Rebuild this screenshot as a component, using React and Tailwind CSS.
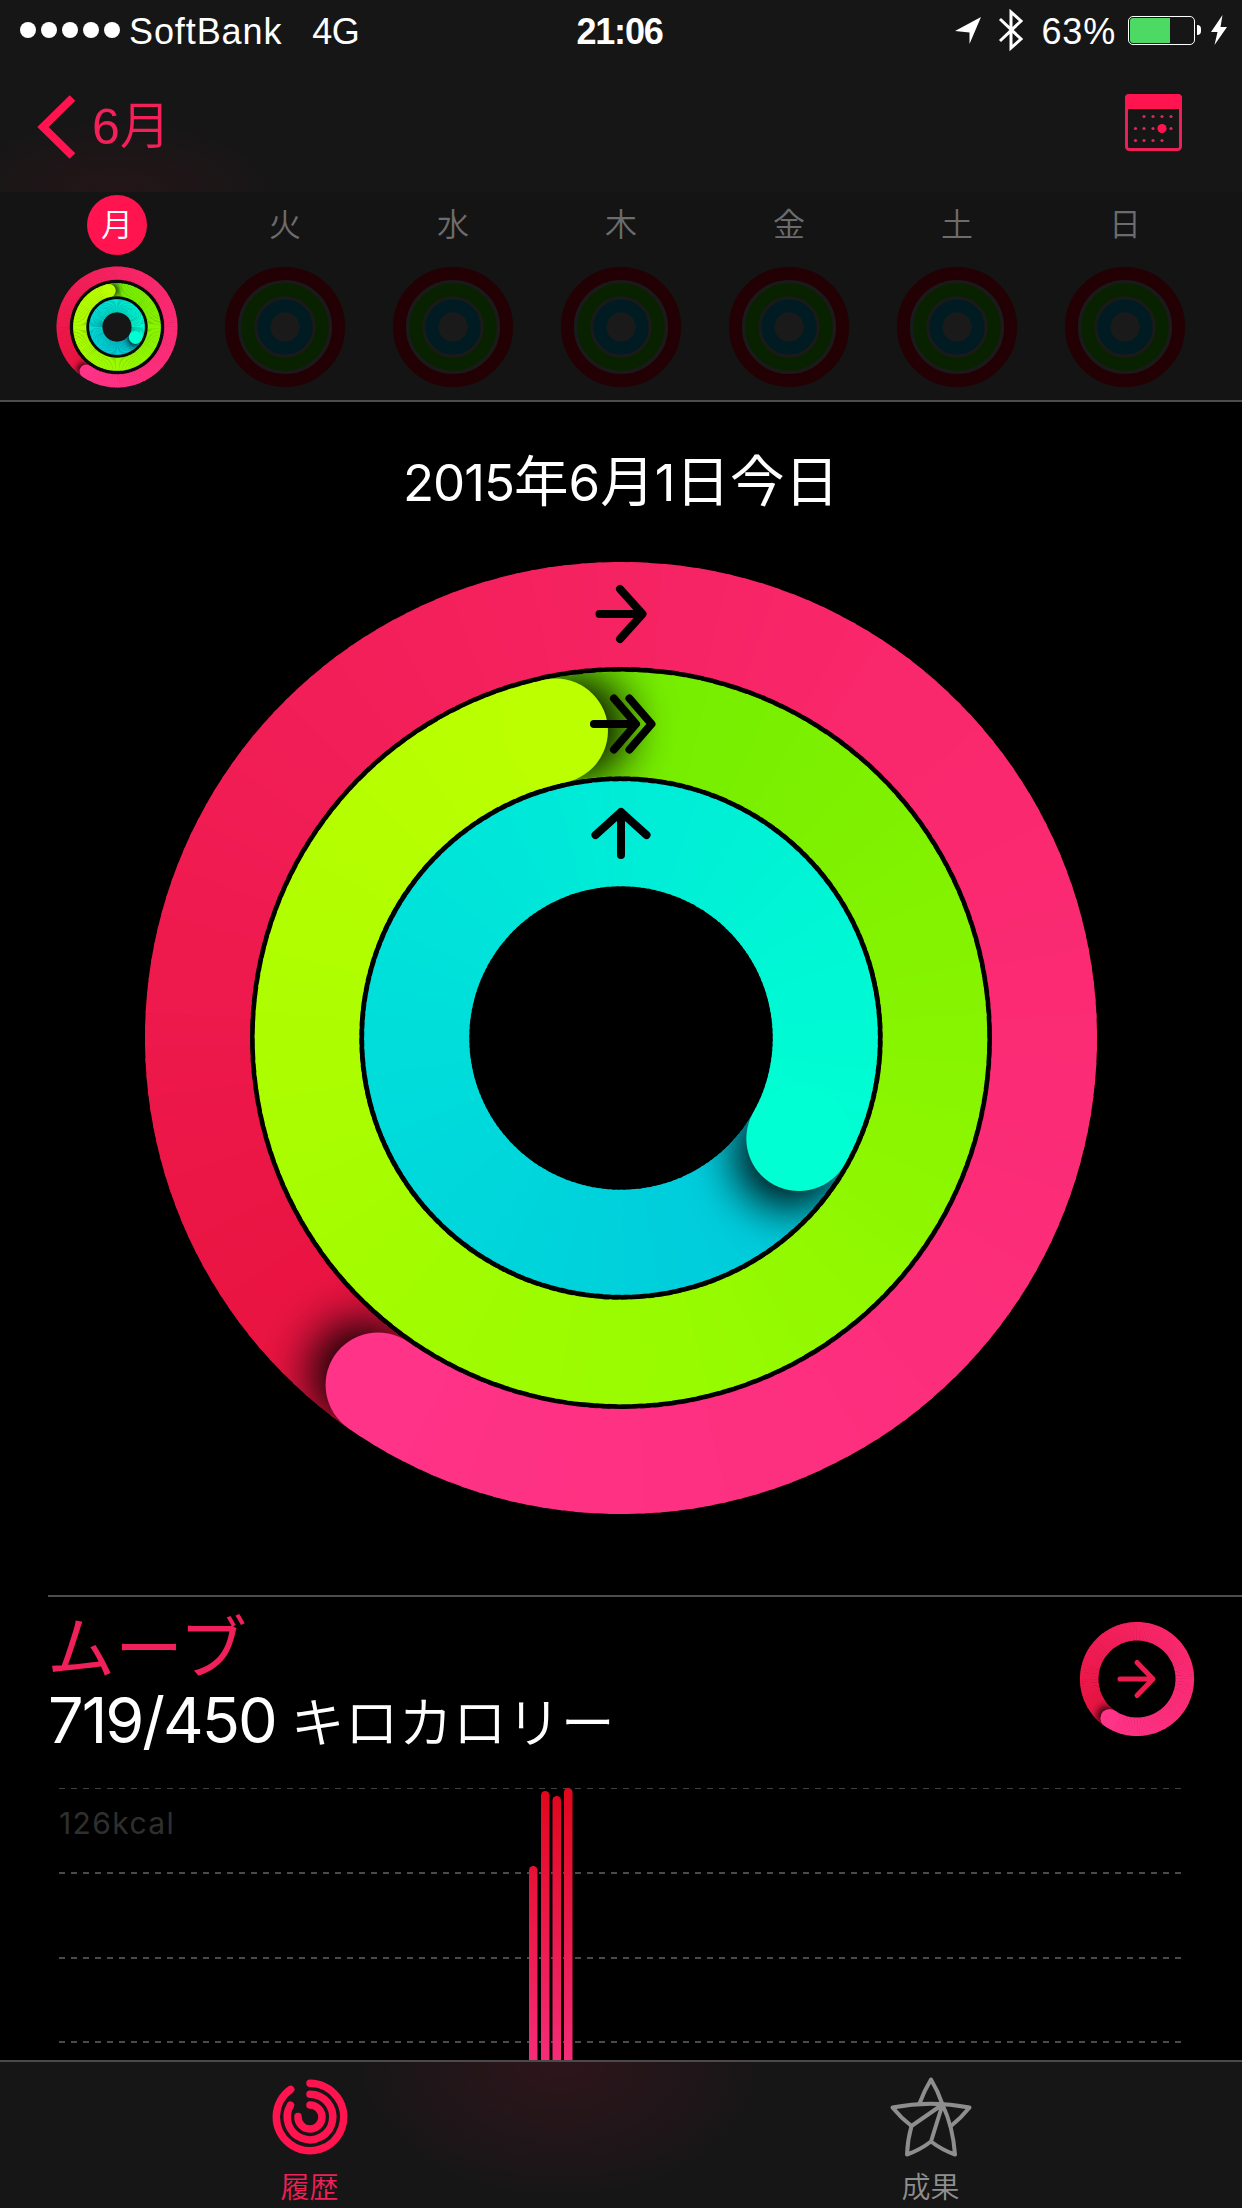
import React from "react";

const WEEK = ["月", "火", "水", "木", "金", "土", "日"];

const MOVE = { from: "#e8123d", mid: "#f9276b", to: "#ff3388", angle: 215 };
const EXERCISE = { from: "#72ec00", mid: "#98fb00", to: "#bcff00", angle: 348 };
const STAND = { from: "#00c8dc", mid: "#00e2da", to: "#00ffd2", angle: 119.5 };

const BARS = [
  { x: 470, top: 78 },
  { x: 482, top: 3 },
  { x: 493.5, top: 8 },
  { x: 505, top: 0 },
];

function point(r, deg) {
  const a = ((deg - 90) * Math.PI) / 180;
  return [r * Math.cos(a), r * Math.sin(a)];
}

function arc(r, start, end) {
  const [x1, y1] = point(r, start);
  const [x2, y2] = point(r, end);
  const large = end - start > 180 ? 1 : 0;
  return `M${x1} ${y1}A${r} ${r} 0 ${large} 1 ${x2} ${y2}`;
}

function mix(a, b, t) {
  const channel = (hex, i) => parseInt(hex.slice(1 + i * 2, 3 + i * 2), 16);
  const rgb = [0, 1, 2].map((i) =>
    Math.round(channel(a, i) + (channel(b, i) - channel(a, i)) * t)
  );
  return `rgb(${rgb.join(",")})`;
}

// One lap of an activity ring, the rounded head lies over its own tail
function Ring({ id, r, width, colors }) {
  const steps = 180;
  const size = 360 / steps;
  const segments = Array.from({ length: steps }, (_, i) => {
    const t = i / (steps - 1);
    const start = colors.angle + i * size;
    return (
      <path
        key={i}
        d={arc(r, start, start + size + (i < steps - 1 ? 0.6 : 0))}
        stroke={
          t < 0.5
            ? mix(colors.from, colors.mid, t * 2)
            : mix(colors.mid, colors.to, t * 2 - 1)
        }
        strokeWidth={width}
      />
    );
  });
  const [cx, cy] = point(r, colors.angle);
  const [sx, sy] = point(r, colors.angle + ((width * 0.18) / r) * 57.3);
  const outer = r + width / 2;
  const inner = r - width / 2;

  return (
    <g fill="none">
      <clipPath id={`${id}-clip`}>
        <path
          clipRule="evenodd"
          d={`M${-outer} 0a${outer} ${outer} 0 1 0 ${outer * 2} 0a${outer} ${outer} 0 1 0 ${-outer * 2} 0zM${-inner} 0a${inner} ${inner} 0 1 0 ${inner * 2} 0a${inner} ${inner} 0 1 0 ${-inner * 2} 0z`}
        />
      </clipPath>
      <filter id={`${id}-blur`} x="-100%" y="-100%" width="300%" height="300%">
        <feGaussianBlur stdDeviation={width * 0.23} />
      </filter>
      {segments.slice(0, 120)}
      <g clipPath={`url(#${id}-clip)`}>
        <circle
          cx={sx}
          cy={sy}
          r={width / 2}
          fill="#000"
          filter={`url(#${id}-blur)`}
        />
      </g>
      {segments.slice(120)}
      <circle cx={cx} cy={cy} r={width / 2} fill={colors.to} />
    </g>
  );
}

function StatusBar() {
  return (
    <div className="grid h-[60px] grid-cols-[1fr_auto_1fr] items-center pl-5 pr-[14px] font-['Liberation_Sans',sans-serif] text-[36px] leading-none text-white">
      <div className="flex items-center">
        <div className="flex gap-[5px]">
          {[0, 1, 2, 3, 4].map((i) => (
            <span key={i} className="h-4 w-4 rounded-full bg-white" />
          ))}
        </div>
        <span className="ml-[9px] mt-1 tracking-[0.9px]">SoftBank</span>
        <span className="ml-[30px] mt-1 tracking-[-0.5px]">4G</span>
      </div>
      <span className="mr-[9px] mt-1 font-bold tracking-[-1.2px]">21:06</span>
      <div className="flex items-center justify-end">
        <svg width="28" height="32" viewBox="0 0 28 32" className="fill-white">
          <path d="M27 3 15.500 30V18.500L1 17z" />
        </svg>
        <svg
          width="26"
          height="44"
          viewBox="0 0 26 44"
          className="ml-4 fill-none stroke-white stroke-[3]"
        >
          <path d="M2 11 23 31 13 40V4L23 13 2 33" />
        </svg>
        <span className="ml-[18px] mt-1 tracking-[0.8px]">63%</span>
        <div className="ml-3 flex h-[29px] w-[67px] rounded-[5px] border-[1.5px] border-white p-[1px]">
          <span className="w-10 rounded-l-[3px] bg-[#4cd964]" />
        </div>
        <span className="ml-[2px] h-[10px] w-1 rounded-r-full bg-white" />
        <svg
          width="18"
          height="30"
          viewBox="0 0 18 30"
          className="ml-[9px] fill-white"
        >
          <path d="M12.500 0 1 17h6.500L4.500 30 17 12h-6.500z" />
        </svg>
      </div>
    </div>
  );
}

function CalendarIcon() {
  const rows = [
    [18, 27, 36, 45],
    [9.5, 18, 27, 45],
    [9.5, 18, 27, 36],
  ];
  return (
    <svg width="57" height="57" viewBox="0 0 57 57">
      <rect
        x="1.500"
        y="1.500"
        width="54"
        height="54"
        rx="3"
        className="fill-none stroke-[#ee1f56] stroke-[3]"
      />
      <path d="M0 15V4a4 4 0 0 1 4-4h49a4 4 0 0 1 4 4v11z" fill="#ff1450" />
      {rows.map((row, y) =>
        row.map((x) => (
          <circle
            key={`${x}-${y}`}
            cx={x + 1}
            cy={22.5 + y * 12}
            r="1.600"
            fill="#d8295a"
          />
        ))
      )}
      <circle cx="37" cy="34.500" r="4.600" fill="#ff1450" />
    </svg>
  );
}

function NavBar() {
  return (
    <div className="flex h-[132px] items-start justify-between pl-[37px] pr-[60px]">
      <button className="flex items-start pt-[34px] text-[#f4205a]">
        <svg
          width="40"
          height="66"
          viewBox="0 0 40 66"
          className="fill-none stroke-[#ff1450] stroke-[8]"
        >
          <path d="M35.500 4 6 33l29.500 29" />
        </svg>
        <span className="ml-[15px] mt-[-5px] flex items-baseline text-[51px] leading-[66px]">
          <span className="font-['Liberation_Sans',sans-serif] text-[50px]">6</span>
          <span className="font-['Noto_Sans_CJK_JP',sans-serif] font-[350]">
            月
          </span>
        </span>
      </button>
      <button className="pt-[34px]">
        <CalendarIcon />
      </button>
    </div>
  );
}

function SmallRings({ active }) {
  return (
    <svg width="124" height="124" viewBox="-62.500 -62.500 125 125">
      {active ? (
        <>
          <circle r="55" fill="#07090a" />
          <circle r="15.500" fill="#161616" />
          <Ring id="day-move" r={54.3} width={13.3} colors={MOVE} />
          <Ring id="day-exercise" r={37.6} width={13.2} colors={EXERCISE} />
          <Ring id="day-stand" r={21.4} width={13.2} colors={STAND} />
        </>
      ) : (
        <g fill="none" strokeWidth="13">
          <circle r="48" fill="#1a1a1a" />
          <circle r="54" stroke="#230003" />
          <circle r="37.500" stroke="#082200" />
          <circle r="21.300" stroke="#001b22" />
        </g>
      )}
    </svg>
  );
}

function WeekStrip() {
  return (
    <div className="grid h-[210px] grid-cols-7 border-b-2 border-[#4d4d4d] bg-[#141414] px-[33px]">
      {WEEK.map((day, i) => (
        <div key={day} className="flex flex-col items-center pt-[3px]">
          <span
            className={`flex h-[60px] w-[60px] items-center justify-center rounded-full pb-[6px] font-['Noto_Sans_CJK_JP',sans-serif] text-[32px] font-[350] leading-none ${
              i === 0 ? "bg-[#ff1450] text-white" : "text-[#6c6c6c]"
            }`}
          >
            {day}
          </span>
          <div className="mt-[10px]">
            <SmallRings active={i === 0} />
          </div>
        </div>
      ))}
    </div>
  );
}

function ActivityRings() {
  return (
    <svg
      width="960"
      height="960"
      viewBox="-480 -480 960 960"
      className="mx-auto block"
    >
      <Ring id="move" r={423.5} width={105} colors={MOVE} />
      <Ring id="exercise" r={314} width={104.5} colors={EXERCISE} />
      <Ring id="stand" r={204.3} width={105} colors={STAND} />
      <g
        fill="none"
        stroke="#000"
        strokeWidth="8"
        strokeLinecap="round"
        strokeLinejoin="round"
      >
        <path d="M-21.500-424H21M-1-449 21.500-424-1-399" />
        <path d="M-27-314H14M-7-339.500 15-314-7-288.500M8.500-339.500 30.500-314 8.500-288.500" />
        <path d="M0-226v43M-25.500-203 0-226 25.500-203" />
      </g>
    </svg>
  );
}

function MoveBadge() {
  return (
    <svg width="116" height="116" viewBox="-58 -58 116 116">
      <Ring id="badge" r={47.8} width={18.5} colors={MOVE} />
      <path
        d="M-17 0H15M0-16.500 16 0 0 16.500"
        className="fill-none stroke-[#ee1c4e] stroke-[5]"
        strokeLinecap="round"
        strokeLinejoin="round"
      />
    </svg>
  );
}

function MoveChart() {
  return (
    <svg width="1123" height="273" viewBox="0 0 1123 273" className="block">
      <linearGradient
        id="bar"
        gradientUnits="userSpaceOnUse"
        x1="0"
        y1="0"
        x2="0"
        y2="273"
      >
        <stop offset="0" stopColor="#e0061b" />
        <stop offset="1" stopColor="#f52c78" />
      </linearGradient>
      <g stroke="#4a4a4a" strokeDasharray="6 6">
        <path d="M0 .5H1123" stroke="#404040" />
        <path d="M0 85H1123M0 170H1123M0 254H1123" strokeWidth="2" />
      </g>
      <text
        x="0"
        y="46"
        className="fill-[#2f2f2f] font-['Inter',sans-serif] text-[30px] font-normal tracking-[1.4px]"
      >
        126kcal
      </text>
      {BARS.map(({ x, top }) => (
        <rect
          key={x}
          x={x}
          y={top}
          width="8.500"
          height="300"
          rx="4.250"
          fill="url(#bar)"
        />
      ))}
    </svg>
  );
}

function MoveSection() {
  return (
    <section className="ml-12 h-[465px] border-t-2 border-[#4d4d4d]">
      <div className="flex h-[191px] justify-between pr-[47px]">
        <div>
          <h2 className="ml-[-1px] mt-[12px] font-['Noto_Sans_CJK_JP',sans-serif] text-[68px] font-normal leading-[70px] text-[#f0205a]">
            ムーブ
          </h2>
          <p className="mt-[3px] flex items-baseline text-white">
            <span className="font-['Inter',sans-serif] text-[63px] font-normal leading-[76px] tracking-[-2px]">
              719/450
            </span>
            <span className="ml-[15px] font-['Noto_Sans_CJK_JP',sans-serif] text-[54px] font-[350] leading-[76px]">
              キロカロリー
            </span>
          </p>
        </div>
        <div className="pt-6">
          <MoveBadge />
        </div>
      </div>
      <div className="pl-[11px]">
        <MoveChart />
      </div>
    </section>
  );
}

function RingsIcon() {
  return (
    <svg
      width="76"
      height="76"
      viewBox="-38 -38 76 76"
      className="fill-none stroke-[#ff1450] stroke-[7.5]"
      strokeLinecap="round"
    >
      <path d={arc(33.7, 0, 325)} />
      <path d={arc(22.8, 0, 301)} />
      <path d={arc(12, 0, 272)} />
    </svg>
  );
}

function StarIcon() {
  return (
    <svg
      width="84"
      height="82"
      viewBox="-42 -41 84 82"
      className="fill-none stroke-[#8e8e8e] stroke-[4]"
      strokeLinecap="round"
      strokeLinejoin="round"
    >
      <path d="M-11.500-13.500Q-7-26 0-37.500 7-26 11.500-12.500" />
      <path d="M-19.500 9Q-30 1-38.500-9.500 0-17 38.500-9.500 30 1 20 9" />
      <path d="M11.500-12.500-19.500 9Q-23.500 23-24 37.500-11 33 0 24.500 11 33 24 37.500 22 10 11.500-12.500L0 24.500" />
    </svg>
  );
}

function Tab({ icon, label, active }) {
  return (
    <button className="flex flex-col items-center pr-[2px]">
      <div className="flex h-[109px] items-center justify-center">{icon}</div>
      <span
        className={`mt-[-1px] font-['Noto_Sans_CJK_JP',sans-serif] text-[29px] font-[350] leading-[30px] ${
          active ? "text-[#f01f56]" : "text-[#8e8e8e]"
        }`}
      >
        {label}
      </span>
    </button>
  );
}

function TabBar() {
  return (
    <nav className="grid h-[148px] grid-cols-2 border-t-2 border-[#4b494a] bg-[#161616] bg-[radial-gradient(ellipse_210px_140px_at_560px_0px,#2e151c,#161616)]">
      <Tab icon={<RingsIcon />} label="履歴" active />
      <Tab icon={<StarIcon />} label="成果" />
    </nav>
  );
}

export default function App() {
  return (
    <div className="flex h-[2208px] w-[1242px] flex-col overflow-hidden bg-black">
      <header>
        <div className="bg-[#161616] bg-[radial-gradient(ellipse_170px_75px_at_115px_192px,#241518,#161616)]">
          <StatusBar />
          <NavBar />
        </div>
        <WeekStrip />
      </header>
      <main className="h-[1658px] overflow-hidden">
        <h1 className="flex h-[156px] items-baseline justify-center pt-[35px] font-normal text-white">
          <span className="font-['Inter',sans-serif] text-[51px] tracking-[-1px]">2015</span>
          <span className="font-['Noto_Sans_CJK_JP',sans-serif] text-[54.500px]">年</span>
          <span className="font-['Inter',sans-serif] text-[51px]">6</span>
          <span className="font-['Noto_Sans_CJK_JP',sans-serif] text-[54.500px]">月</span>
          <span className="font-['Inter',sans-serif] text-[51px]">1</span>
          <span className="font-['Noto_Sans_CJK_JP',sans-serif] text-[54.500px]">日今日</span>
        </h1>
        <div className="h-[1037px]">
          <ActivityRings />
        </div>
        <MoveSection />
      </main>
      <TabBar />
    </div>
  );
}
